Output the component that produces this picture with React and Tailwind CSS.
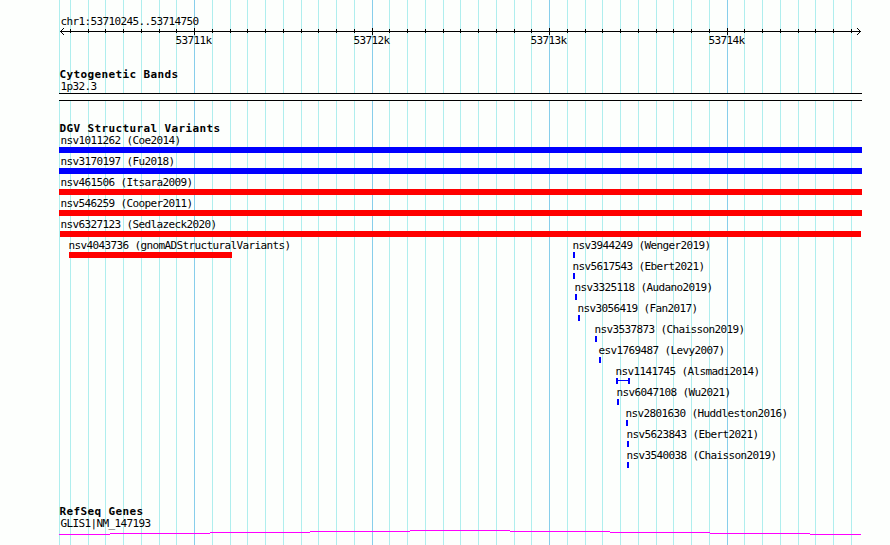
const MINOR_LINES = [
  59, 70, 88, 105, 123, 141, 159, 176, 212, 230, 247, 265, 283, 301, 318, 336, 354, 389, 407, 425, 443, 460,
  478, 496, 514, 531, 567, 585, 602, 620, 638, 656, 673, 691, 709, 744, 762, 780, 798, 815, 833, 851,
]

const MAJOR_LINES = [
  { x: 194, label: '53711k' },
  { x: 372, label: '53712k' },
  { x: 549, label: '53713k' },
  { x: 727, label: '53714k' },
]

// One entry per row; features in the same row do not overlap
const VARIANT_ROWS = [
  [{ name: 'nsv1011262 (Coe2014)', x: 59, width: 803, type: 'gain' }],
  [{ name: 'nsv3170197 (Fu2018)', x: 59, width: 803, type: 'gain' }],
  [{ name: 'nsv461506 (Itsara2009)', x: 59, width: 803, type: 'loss' }],
  [{ name: 'nsv546259 (Cooper2011)', x: 59, width: 803, type: 'loss' }],
  [{ name: 'nsv6327123 (Sedlazeck2020)', x: 60, width: 801, type: 'loss' }],
  [
    { name: 'nsv4043736 (gnomADStructuralVariants)', x: 69, width: 163, type: 'loss' },
    { name: 'nsv3944249 (Wenger2019)', x: 573, width: 2, type: 'gain' },
  ],
  [{ name: 'nsv5617543 (Ebert2021)', x: 573, width: 2, type: 'gain' }],
  [{ name: 'nsv3325118 (Audano2019)', x: 575, width: 2, type: 'gain' }],
  [{ name: 'nsv3056419 (Fan2017)', x: 578, width: 2, type: 'gain' }],
  [{ name: 'nsv3537873 (Chaisson2019)', x: 595, width: 2, type: 'gain' }],
  [{ name: 'esv1769487 (Levy2007)', x: 599, width: 2, type: 'gain' }],
  [{ name: 'nsv1141745 (Alsmadi2014)', x: 616, width: 14, type: 'span' }],
  [{ name: 'nsv6047108 (Wu2021)', x: 617, width: 2, type: 'gain' }],
  [{ name: 'nsv2801630 (Huddleston2016)', x: 626, width: 2, type: 'gain' }],
  [{ name: 'nsv5623843 (Ebert2021)', x: 627, width: 2, type: 'gain' }],
  [{ name: 'nsv3540038 (Chaisson2019)', x: 627, width: 2, type: 'gain' }],
]

const BAR_COLORS = {
  gain: 'bg-[#0000ff]',
  loss: 'bg-[#ff0000]',
}

function GridLines() {
  return (
    <svg className="absolute inset-0" width="890" height="545" shapeRendering="crispEdges">
      {MINOR_LINES.map(x => (
        <rect key={x} x={x} y="0" width="1" height="545" fill="#afeeee" />
      ))}
      {MAJOR_LINES.map(({ x }) => (
        <rect key={x} x={x} y="0" width="1" height="545" fill="#87ceeb" />
      ))}
    </svg>
  )
}

function Ruler() {
  return (
    <svg className="block" width="890" height="21" viewBox="0 1 890 21" shapeRendering="crispEdges">
      <rect x="60" y="4" width="801" height="1" />
      {MINOR_LINES.slice(1).map(x => (
        <rect key={x} x={x} y="2" width="1" height="4" />
      ))}
      {MAJOR_LINES.map(({ x, label }) => (
        <g key={x}>
          <rect x={x} y="1" width="1" height="7" />
          <text x={x - 18.6} y="17">{label}</text>
        </g>
      ))}
      {[1, 2, 3].map(i => (
        <g key={i}>
          <rect x={60 + i} y={4 - i} width="1" height="1" />
          <rect x={60 + i} y={4 + i} width="1" height="1" />
          <rect x={860 - i} y={4 - i} width="1" height="1" />
          <rect x={860 - i} y={4 + i} width="1" height="1" />
        </g>
      ))}
    </svg>
  )
}

function TrackTitle({ children }) {
  return (
    <h2 className="ml-[59.4px] h-3 text-[11px] leading-3 font-bold tracking-[0.38px]">{children}</h2>
  )
}

function Feature({ name, x, width, type }) {
  return (
    <div className="col-start-1 row-start-1">
      <div className="h-3 leading-3" style={{ marginLeft: Math.max(60, x - 1) + 0.4 }}>{name}</div>
      {type === 'span' ? (
        <div className="flex h-1.5 items-center border-x-2 border-[#0000ff]" style={{ marginLeft: x, width }}>
          <div className="-mt-px h-px w-full bg-[#0000ff]" />
        </div>
      ) : (
        <div className={`h-1.5 ${BAR_COLORS[type]}`} style={{ marginLeft: x, width }} />
      )}
    </div>
  )
}

function GeneLine() {
  return (
    <svg className="block" width="890" height="15" viewBox="0 1 890 15" shapeRendering="crispEdges" fill="#ff00ff">
      <rect x="59" y="5" width="51" height="1" />
      <rect x="110" y="4" width="100" height="1" />
      <rect x="210" y="3" width="100" height="1" />
      <rect x="310" y="2" width="100" height="1" />
      <rect x="410" y="1" width="100" height="1" />
      <rect x="510" y="2" width="100" height="1" />
      <rect x="610" y="3" width="100" height="1" />
      <rect x="710" y="4" width="100" height="1" />
      <rect x="810" y="5" width="51" height="1" />
    </svg>
  )
}

export default function App() {
  return (
    <div className="relative h-[545px] w-[890px] overflow-hidden bg-[#fdfffd] font-['DejaVu_Sans_Mono',monospace] text-[11px] tracking-[-0.622px] whitespace-nowrap text-black">
      <GridLines />
      <main className="relative flex h-full flex-col">
        <header className="pt-4">
          <div className="ml-[60.4px] h-3 leading-3">chr1:53710245..53714750</div>
          <Ruler />
        </header>

        <section className="mt-5">
          <TrackTitle>Cytogenetic Bands</TrackTitle>
          <div className="ml-[60.4px] h-3 leading-3">1p32.3</div>
          <div className="ml-[59px] h-2 w-[803px] border-y border-black bg-[#fdfffd]" />
        </section>

        <section className="mt-[22px]">
          <TrackTitle>DGV Structural Variants</TrackTitle>
          <div className="flex flex-col gap-[3px]">
            {VARIANT_ROWS.map(row => (
              <div key={row[0].name} className="grid h-[18px]">
                {row.map(feature => (
                  <Feature key={feature.name} {...feature} />
                ))}
              </div>
            ))}
          </div>
        </section>

        <section className="mt-[38px]">
          <TrackTitle>RefSeq Genes</TrackTitle>
          <div className="ml-[60.4px] h-3 leading-3">GLIS1|NM_147193</div>
          <GeneLine />
        </section>
      </main>
    </div>
  )
}
